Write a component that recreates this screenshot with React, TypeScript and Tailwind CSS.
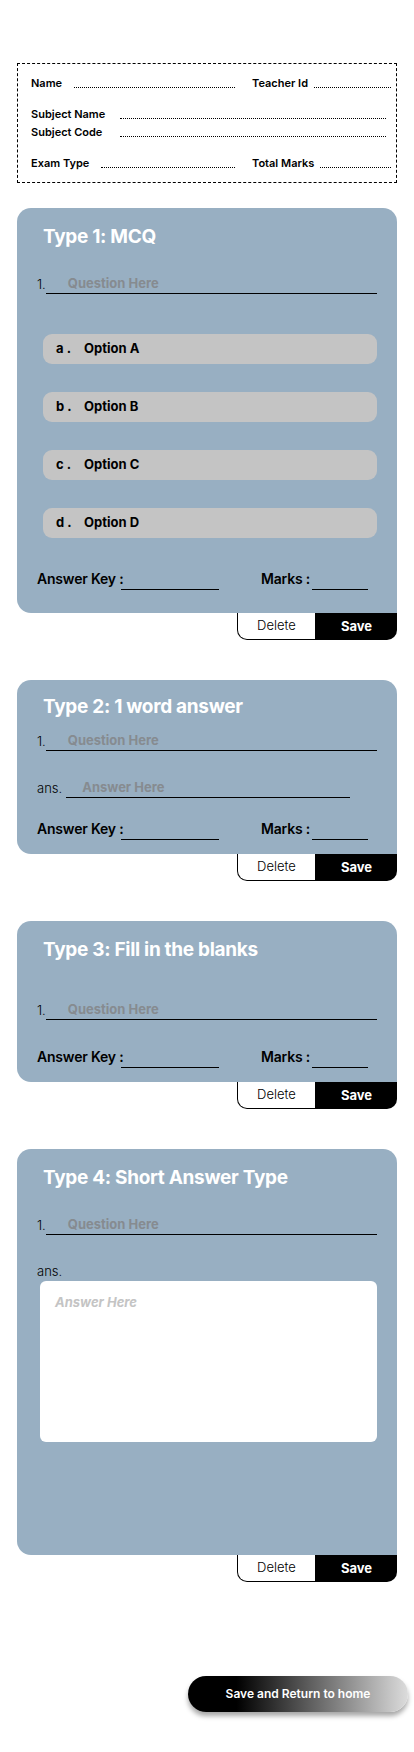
import React from "react";

const font = { fontFamily: "Inter, 'Open Sans', sans-serif" };

type RowProps = { label: string; lineClass: string };

const DotField = ({ label, lineClass }: RowProps) => (
  <div className="flex h-[16px] items-end">
    <span className="text-[11px] font-semibold leading-[16px] text-black">{label}</span>
    <div className={`mb-[3px] border-b border-dotted border-black ${lineClass}`} />
  </div>
);

const QuestionLine = () => (
  <div className="flex items-end pl-[20px] pr-[20px]">
    <span className="text-[13px] leading-[20px] font-light text-black">1.</span>
    <div className="flex-1 border-b border-black pl-[22px] text-[13px] font-bold leading-[20px] text-[#868b90]">
      Question Here
    </div>
  </div>
);

const AnswerKey = ({ className }: { className: string }) => (
  <div className={`flex items-end pl-[20px] ${className}`}>
    <span className="w-[84px] whitespace-nowrap text-[14px] font-semibold leading-[20px] tracking-[-0.2px] text-black">
      Answer Key :
    </span>
    <div className="mb-[-1px] w-[98px] border-b border-black" />
    <span className="ml-[42px] w-[51px] whitespace-nowrap text-[14px] font-semibold leading-[20px] tracking-[-0.2px] text-black">
      Marks :
    </span>
    <div className="mb-[-1px] w-[56px] border-b border-black" />
  </div>
);

const Buttons = () => (
  <div className="flex justify-end">
    <button className="h-[27px] w-[79px] rounded-bl-[10px] border border-t-0 border-black bg-white text-[13px] font-light text-black">
      Delete
    </button>
    <button className="h-[27px] w-[81px] rounded-br-[10px] bg-black text-[13px] font-bold text-white">
      Save
    </button>
  </div>
);

const Title = ({ text }: { text: string }) => (
  <h2 className="pl-[26px] text-[19px] font-bold leading-[28px] tracking-[-0.3px] text-white">{text}</h2>
);

const options = [
  { key: "a", label: "Option A" },
  { key: "b", label: "Option B" },
  { key: "c", label: "Option C" },
  { key: "d", label: "Option D" },
];

export default function App() {
  return (
    <div className="min-h-[1752px] bg-white px-[17px] pt-[63px] pb-[43px]" style={font}>
      {/* header */}
      <div className="border border-dashed border-black pt-[11px] pb-[11px] pl-[13px] pr-[5px]">
        <div className="flex">
          <div className="w-[204px]">
            <DotField label="Name" lineClass="ml-[12px] flex-1" />
          </div>
          <div className="ml-[17px] flex-1">
            <DotField label="Teacher Id" lineClass="ml-[6px] flex-1" />
          </div>
        </div>
        <div className="mt-[15px] pr-[5px]">
          <div className="flex h-[16px] items-end">
            <span className="w-[89px] text-[11px] font-semibold leading-[16px]">Subject Name</span>
            <div className="mb-[3px] flex-1 border-b border-dotted border-black" />
          </div>
          <div className="mt-[2px] flex h-[16px] items-end">
            <span className="w-[89px] text-[11px] font-semibold leading-[16px]">Subject Code</span>
            <div className="mb-[3px] flex-1 border-b border-dotted border-black" />
          </div>
        </div>
        <div className="mt-[15px] flex">
          <div className="w-[204px]">
            <DotField label="Exam Type" lineClass="ml-[12px] flex-1" />
          </div>
          <div className="ml-[17px] flex-1">
            <DotField label="Total Marks" lineClass="ml-[6px] flex-1" />
          </div>
        </div>
      </div>

      {/* type 1 */}
      <div className="mt-[25px]">
        <div className="rounded-t-[14px] rounded-bl-[14px] bg-[#98afc2] pt-[15px] pb-[24px]">
          <Title text="Type 1: MCQ" />
          <div className="mt-[22px]">
            <QuestionLine />
          </div>
          <div className="mt-[40px] ml-[26px] mr-[20px] flex flex-col gap-[28px]">
            {options.map((o) => (
              <div
                key={o.key}
                className="flex h-[30px] items-center rounded-[9px] bg-[#c4c4c4] pl-[13px] text-[13px] font-bold text-black"
              >
                <span className="w-[28px]">{o.key} .</span>
                <span>{o.label}</span>
              </div>
            ))}
          </div>
          <AnswerKey className="mt-[31px]" />
        </div>
        <Buttons />
      </div>

      {/* type 2 */}
      <div className="mt-[40px]">
        <div className="rounded-t-[14px] rounded-bl-[14px] bg-[#98afc2] pt-[13px] pb-[15px]">
          <Title text="Type 2: 1 word answer" />
          <div className="mt-[9px]">
            <QuestionLine />
          </div>
          <div className="mt-[26px] flex items-end pl-[20px]">
            <span className="text-[13px] font-light leading-[20px] text-black">ans.</span>
            <div className="ml-[4px] w-[284px] border-b border-black pl-[16px] text-[13px] font-bold leading-[20px] text-[#868b90]">
              Answer Here
            </div>
          </div>
          <AnswerKey className="mt-[21px]" />
        </div>
        <Buttons />
      </div>

      {/* type 3 */}
      <div className="mt-[40px]">
        <div className="rounded-t-[14px] rounded-bl-[14px] bg-[#98afc2] pt-[15px] pb-[15px]">
          <Title text="Type 3: Fill in the blanks" />
          <div className="mt-[35px]">
            <QuestionLine />
          </div>
          <AnswerKey className="mt-[27px]" />
        </div>
        <Buttons />
      </div>

      {/* type 4 */}
      <div className="mt-[40px]">
        <div className="rounded-t-[14px] rounded-bl-[14px] bg-[#98afc2] pt-[15px] pb-[113px]">
          <Title text="Type 4: Short Answer Type" />
          <div className="mt-[22px]">
            <QuestionLine />
          </div>
          <div className="mt-[27px] pl-[20px] text-[13px] font-light leading-[19px] text-black">ans.</div>
          <div className="ml-[23px] mr-[20px] h-[161px] rounded-[6px] bg-white pl-[15px] pt-[12px] text-[13px] font-bold italic text-[#c4c4c4]">
            Answer Here
          </div>
        </div>
        <Buttons />
      </div>

      <div className="mt-[94px] flex justify-end">
        <button className="-mr-[11px] h-[36px] w-[220px] rounded-full bg-[linear-gradient(to_right,#000_22%,#dcdcdc_100%)] text-[12px] font-semibold text-white shadow-[0_4px_5px_rgba(0,0,0,0.35)]">
          Save and Return to home
        </button>
      </div>
    </div>
  );
}
